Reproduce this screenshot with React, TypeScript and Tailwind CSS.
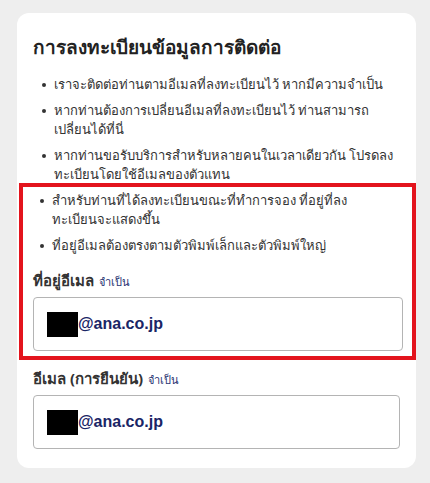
const FONT = "font-['Tahoma','Noto_Sans','DejaVu_Sans',sans-serif]";

const notes = [
  "เราจะติดต่อท่านตามอีเมลที่ลงทะเบียนไว้ หากมีความจำเป็น",
  "หากท่านต้องการเปลี่ยนอีเมลที่ลงทะเบียนไว้ ท่านสามารถเปลี่ยนได้ที่นี่",
  "หากท่านขอรับบริการสำหรับหลายคนในเวลาเดียวกัน โปรดลงทะเบียนโดยใช้อีเมลของตัวแทน",
];

const highlighted = [
  "สำหรับท่านที่ได้ลงทะเบียนขณะที่ทำการจอง ที่อยู่ที่ลงทะเบียนจะแสดงขึ้น",
  "ที่อยู่อีเมลต้องตรงตามตัวพิมพ์เล็กและตัวพิมพ์ใหญ่",
];

function Bullet({ text }: { text: string }) {
  return (
    <li className="flex text-[13px] leading-[19px] text-[#333333]">
      <span className="w-[19px] shrink-0 flex justify-center pt-[8px] pr-[2px]">
        <span className="block h-[4px] w-[4px] rounded-full bg-[#333333]" />
      </span>
      <span className="pr-[14px]">{text}</span>
    </li>
  );
}

function EmailField({ label }: { label: string }) {
  return (
    <div>
      <div className="flex items-baseline gap-[5px] leading-[20px]">
        <span className="text-[15px] font-bold text-[#333333]">{label}</span>
        <span className="text-[11px] text-[#1f3272]">จำเป็น</span>
      </div>
      <div className="mt-[5px] flex h-[54px] items-center rounded-[4px] border border-[#b4b4b4] bg-white pl-[13px]">
        <span className="block h-[25px] w-[31px] bg-black" />
        <span className="text-[16px] font-bold text-[#1a2566] font-['Liberation_Sans',Arial,sans-serif]">@ana.co.jp</span>
      </div>
    </div>
  );
}

export default function App() {
  return (
    <div className={`min-h-[483px] w-[430px] bg-[#eeeeee] pt-[13px] ${FONT}`}>
      <div className="ml-[17px] w-[399px] rounded-[12px] bg-white pt-[20px] pb-[19px]">
        <h2 className="pl-[16px] text-[19px] font-bold leading-[28px] text-[#222222]">
          การลงทะเบียนข้อมูลการติดต่อ
        </h2>
        <ul className="mt-[14px] flex flex-col gap-[7px] pl-[18px]">
          {notes.map((n) => (
            <Bullet key={n} text={n} />
          ))}
        </ul>
        <div className="ml-[2px] mt-[-1px] border-4 border-[#e3141d] pt-[4px] pb-[5px] pl-[10px] pr-[9px]">
          <ul className="flex flex-col gap-[7px]">
            {highlighted.map((n) => (
              <Bullet key={n} text={n} />
            ))}
          </ul>
          <div className="mt-[15px]">
            <EmailField label="ที่อยู่อีเมล" />
          </div>
        </div>
        <div className="mt-[8px] px-[16px]">
          <EmailField label="อีเมล (การยืนยัน)" />
        </div>
      </div>
    </div>
  );
}
